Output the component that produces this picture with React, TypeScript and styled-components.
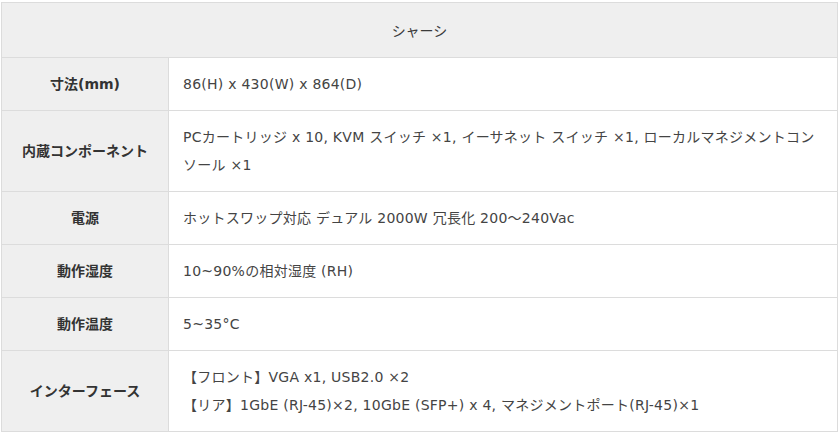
import { createGlobalStyle } from 'styled-components';
import styled from 'styled-components';

const GlobalStyle = createGlobalStyle`
  body {
    margin: 0;
    background: #fff;
    font-family: "DejaVu Sans", "Noto Sans CJK JP", sans-serif;
    color: #333;
  }
`;

const Page = styled.div`
  padding: 2px 2px 0 1px;
`;

const SpecTable = styled.table`
  width: 837px;
  border-collapse: collapse;
  border: 1px solid #dcdcdc;
  font-size: 14px;
  line-height: 28px;
  table-layout: fixed;
`;

const HeadCell = styled.th`
  background: #efefef;
  font-weight: normal;
  text-align: center;
  height: 54px;
  padding: 0;
  border-bottom: 1px solid #dcdcdc;
  font-family: "Noto Sans CJK JP", sans-serif;
  color: #3a3a3a;
`;

const Row = styled.tr<{ $tall?: boolean }>`
  height: ${(p) => (p.$tall ? 81 : 53)}px;
`;

const Label = styled.th`
  background: #efefef;
  font-weight: bold;
  text-align: center;
  padding: 12px 8px;
  border: 1px solid #dcdcdc;
  color: #333;
`;

const Value = styled.td`
  padding: 12px 14px 12px 14px;
  border: 1px solid #dcdcdc;
  vertical-align: middle;
  letter-spacing: 0.25px;
  color: #444;
`;

const rows: { label: string; value: string[]; tall?: boolean }[] = [
  { label: '寸法(mm)', value: ['86(H) x 430(W) x 864(D)'] },
  {
    label: '内蔵コンポーネント',
    value: ['PCカートリッジ x 10, KVM スイッチ ×1, イーサネット スイッチ ×1, ローカルマネジメントコンソール ×1'],
    tall: true,
  },
  { label: '電源', value: ['ホットスワップ対応 デュアル 2000W 冗長化 200～240Vac'] },
  { label: '動作湿度', value: ['10~90%の相対湿度 (RH)'] },
  { label: '動作温度', value: ['5~35°C'] },
  {
    label: 'インターフェース',
    value: ['【フロント】VGA x1, USB2.0 ×2', '【リア】1GbE (RJ-45)×2, 10GbE (SFP+) x 4, マネジメントポート(RJ-45)×1'],
    tall: true,
  },
];

export default function App() {
  return (
    <Page>
      <GlobalStyle />
      <SpecTable>
        <colgroup>
          <col style={{ width: 167 }} />
          <col />
        </colgroup>
        <thead>
          <tr>
            <HeadCell colSpan={2}>シャーシ</HeadCell>
          </tr>
        </thead>
        <tbody>
          {rows.map((r) => (
            <Row key={r.label} $tall={r.tall}>
              <Label>{r.label}</Label>
              <Value>
                {r.value.map((v, i) => (
                  <div key={i}>{v}</div>
                ))}
              </Value>
            </Row>
          ))}
        </tbody>
      </SpecTable>
    </Page>
  );
}
